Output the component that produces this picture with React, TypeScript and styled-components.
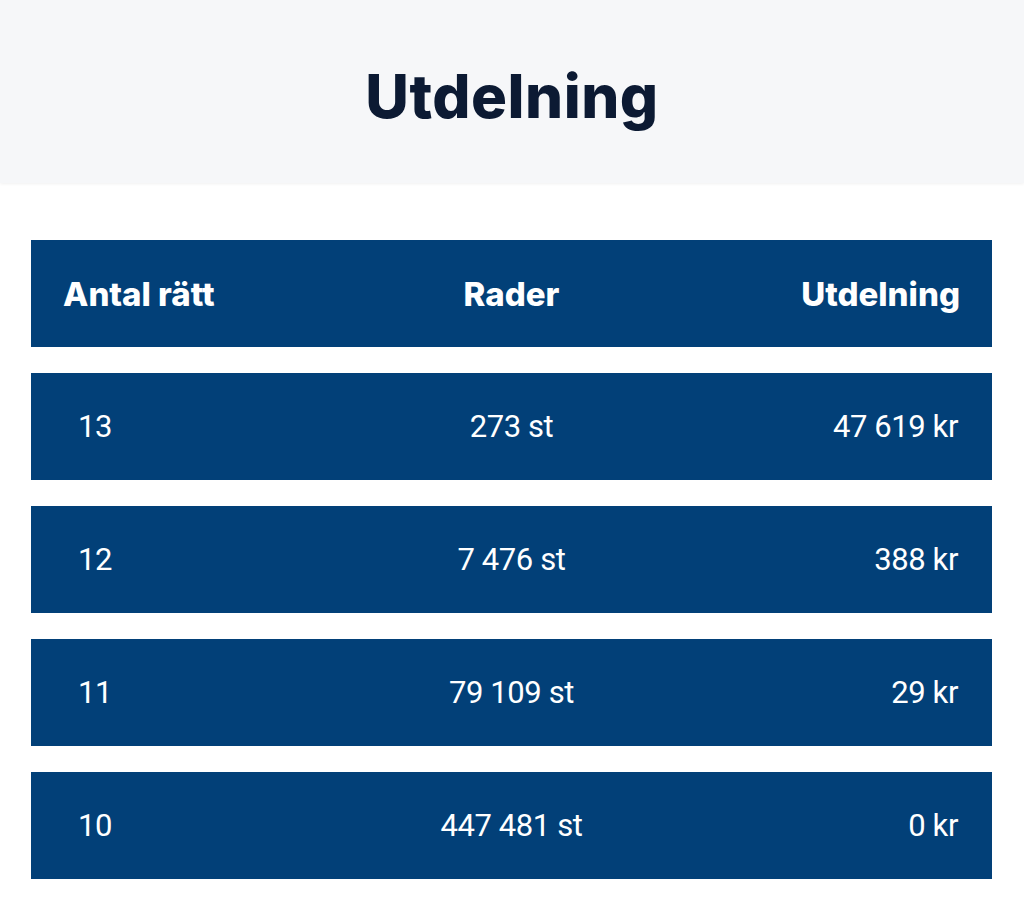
import React from "react";
import styled, { createGlobalStyle } from "styled-components";

const Global = createGlobalStyle`
  html, body { margin: 0; padding: 0; background: #ffffff; }
  body { font-family: Roboto, "Noto Sans", sans-serif; }
`;

const Page = styled.div`
  width: 1024px;
  min-height: 904px;
  background: #ffffff;
`;

const Hero = styled.header`
  height: 183px;
  background: #f6f7f9;
  box-shadow: 0 1px 3px rgba(0, 0, 0, 0.06);
  display: flex;
  align-items: center;
  justify-content: center;
`;

const Title = styled.h1`
  margin: 0;
  padding-top: 8px;
  font-family: Inter, "Noto Sans", sans-serif;
  font-weight: 800;
  font-size: 60px;
  letter-spacing: 0.5px;
  color: #0c1a33;
`;

const Table = styled.div`
  margin: 57px 32px 0 31px;
  display: flex;
  flex-direction: column;
  gap: 26px;
`;

const Row = styled.div<{ $head?: boolean }>`
  height: 107px;
  background: #024078;
  color: #ffffff;
  display: grid;
  grid-template-columns: 1fr auto 1fr;
  align-items: center;
  font-family: ${(p) => (p.$head ? 'Inter, "Noto Sans", sans-serif' : 'Roboto, "Noto Sans", sans-serif')};
  font-weight: ${(p) => (p.$head ? 800 : 400)};
  font-size: ${(p) => (p.$head ? "33px" : "31px")};
  letter-spacing: ${(p) => (p.$head ? "0px" : "-0.4px")};
`;

const Left = styled.div<{ $head?: boolean }>`
  padding-left: ${(p) => (p.$head ? "32px" : "47px")};
  text-align: left;
`;

const Mid = styled.div`
  text-align: center;
`;

const Right = styled.div<{ $head?: boolean }>`
  padding-right: ${(p) => (p.$head ? "32px" : "34px")};
  text-align: right;
`;

const rows = [
  ["13", "273 st", "47 619 kr"],
  ["12", "7 476 st", "388 kr"],
  ["11", "79 109 st", "29 kr"],
  ["10", "447 481 st", "0 kr"],
];

export default function App() {
  return (
    <Page>
      <Global />
      <Hero>
        <Title>Utdelning</Title>
      </Hero>
      <Table>
        <Row $head>
          <Left $head>Antal rätt</Left>
          <Mid>Rader</Mid>
          <Right $head>Utdelning</Right>
        </Row>
        {rows.map((r) => (
          <Row key={r[0]}>
            <Left>{r[0]}</Left>
            <Mid>{r[1]}</Mid>
            <Right>{r[2]}</Right>
          </Row>
        ))}
      </Table>
    </Page>
  );
}
